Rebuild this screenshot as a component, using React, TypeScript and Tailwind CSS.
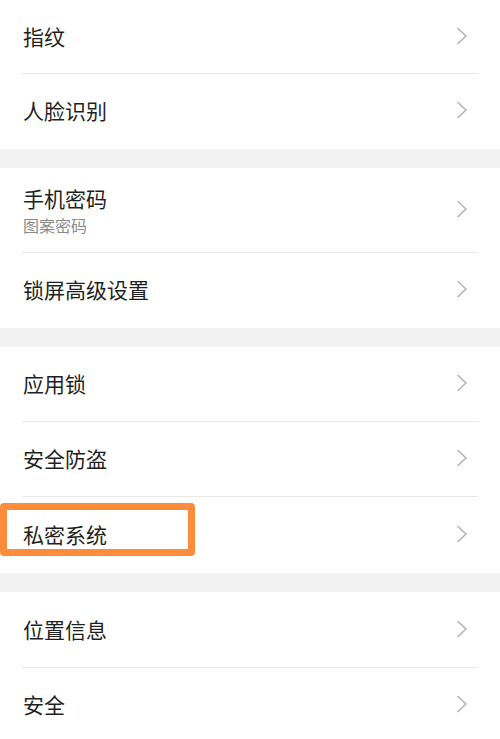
import type { ReactNode } from 'react'

const FONT = '"Noto Sans CJK SC", "Noto Sans", sans-serif'

function Chevron() {
  return (
    <svg width="12" height="18" viewBox="0 0 12 18" fill="none" stroke="#b0b0b0" strokeWidth="1.5" strokeLinecap="round" strokeLinejoin="round">
      <path d="M2 1.5l8 7.5-8 7.5" />
    </svg>
  )
}

interface RowProps {
  title: string
  sub?: string
  divider?: boolean
  height?: string
  highlight?: boolean
}

function Row({ title, sub, divider, height = 'h-[75px]', highlight }: RowProps) {
  return (
    <div className={`relative ${height} bg-white`}>
      <div className="flex h-full items-center justify-between pl-[23px] pr-[32px]">
        <div className="flex flex-col pb-[3px]">
          <span className="text-[21px] leading-[28px] text-[#1f1f1f]">{title}</span>
          {sub && <span className="mt-[3px] text-[16px] leading-[20px] text-[#8a8a8a]">{sub}</span>}
        </div>
        <div className="pb-[3px]">
          <Chevron />
        </div>
      </div>
      {divider && <div className="absolute bottom-0 left-[22px] right-[22px] h-px bg-[#e8e8e8]" />}
      {highlight && (
        <div className="absolute left-0 top-[6px] h-[53px] w-[195px] rounded-[4px] border-[7px] border-[#fc8c3c]" />
      )}
    </div>
  )
}

function Section({ children }: { children: ReactNode }) {
  return <div className="flex flex-col">{children}</div>
}

function Gap() {
  return <div className="h-[19px] bg-[#f2f2f2]" />
}

export default function App() {
  return (
    <div className="w-[500px] h-[739px] overflow-hidden bg-white" style={{ fontFamily: FONT }}>
      <Section>
        <Row title="指纹" divider height="h-[74px]" />
        <Row title="人脸识别" />
      </Section>
      <Gap />
      <Section>
        <Row title="手机密码" sub="图案密码" divider height="h-[85px]" />
        <Row title="锁屏高级设置" />
      </Section>
      <Gap />
      <Section>
        <Row title="应用锁" divider />
        <Row title="安全防盗" divider />
        <Row title="私密系统" highlight height="h-[76px]" />
      </Section>
      <Gap />
      <Section>
        <Row title="位置信息" divider height="h-[76px]" />
        <Row title="安全" />
      </Section>
    </div>
  )
}
